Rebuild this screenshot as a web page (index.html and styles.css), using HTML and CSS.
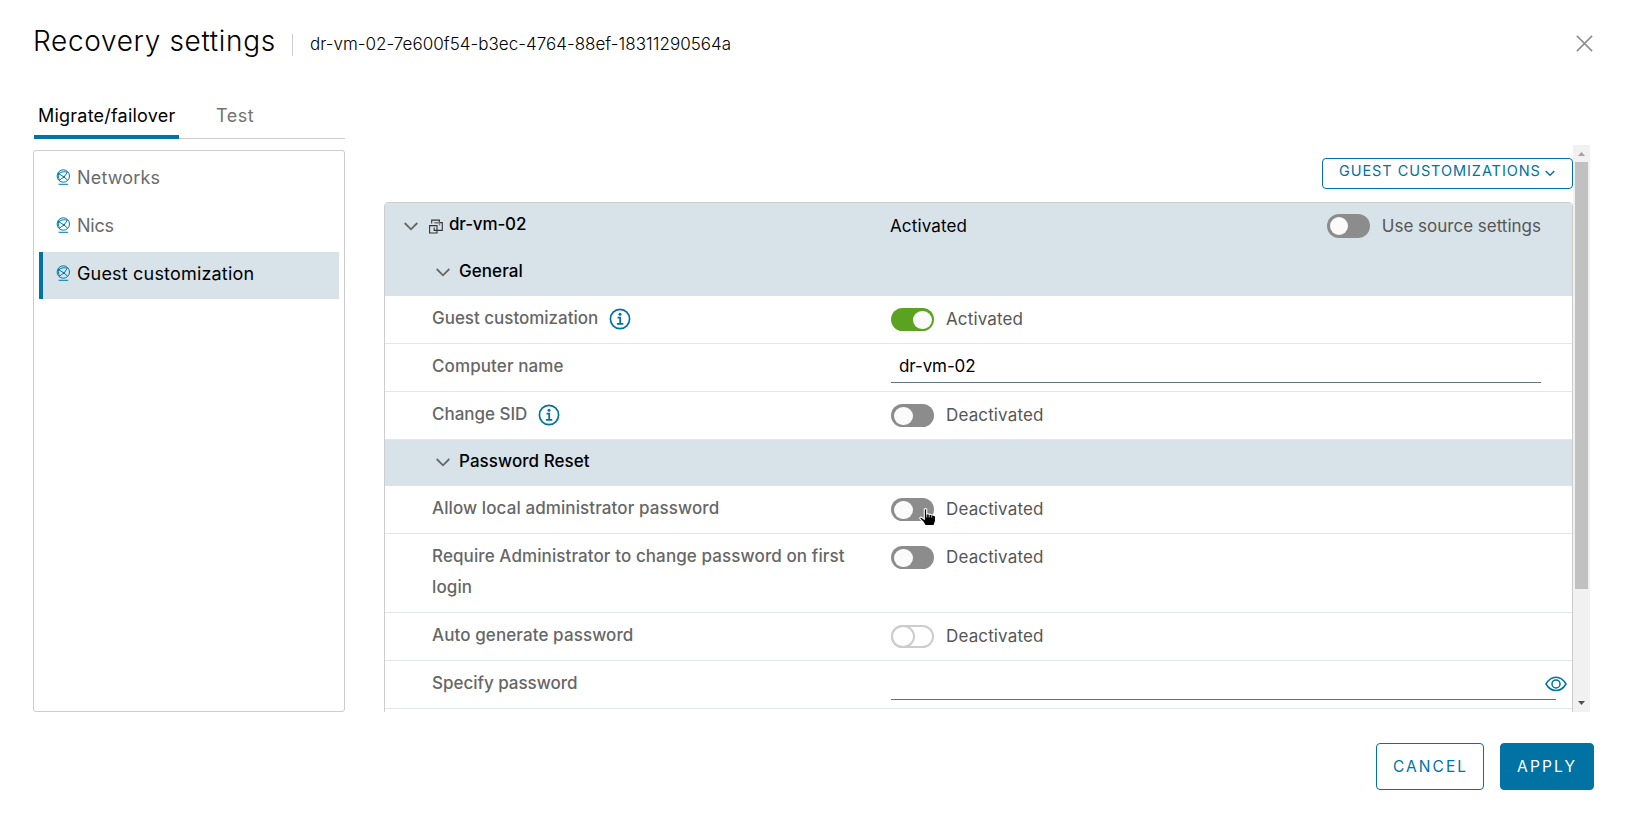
FILE: index.html
```
<!DOCTYPE html>
<html lang="en">
<head>
<meta charset="utf-8">
<title>Recovery settings</title>
<link rel="stylesheet" href="styles.css">
</head>
<body>
<svg class="defs" width="0" height="0" aria-hidden="true">
  <symbol id="globe" viewBox="0 0 15 17">
    <g fill="none" stroke="#0079ad" stroke-width="1">
      <circle cx="7.3" cy="7" r="6.2"/>
      <path d="M2.600 4.600 L8 8 L11.400 3.200 M2.600 4.600 C5.500 2.600 8.500 2.300 11.400 3.200 M2.600 4.600 C2.400 7 2.600 9 3.400 11.400 M3.400 11.400 C5 9.800 6.500 8.800 8 8 M8 8 L11.600 11.200"/>
      <path d="M2.600 15.300 H12.200"/>
    </g>
    <circle cx="8" cy="8" r="1.100" fill="#0079ad"/>
    <circle cx="2.800" cy="4.600" r=".9" fill="#0079ad"/>
  </symbol>
  <symbol id="chevron" viewBox="0 0 14 9">
    <path d="M.7 1 L7 7.3 L13.3 1" fill="none" stroke="#666" stroke-width="1.8"/>
  </symbol>
  <symbol id="info" viewBox="0 0 22 22">
    <circle cx="11" cy="11" r="9.6" fill="none" stroke="#0072a3" stroke-width="1.7"/>
    <circle cx="11" cy="6.2" r="1.5" fill="#0072a3"/>
    <path d="M8.5 9.6 H11.2 V15.8 M7.9 15.9 H14.3" fill="none" stroke="#0072a3" stroke-width="1.8"/>
  </symbol>
</svg>

<div class="dialog">
  <header class="header">
    <h1 class="title">Recovery settings</h1>
    <span class="divider"></span>
    <span class="subtitle">dr-vm-02-7e600f54-b3ec-4764-88ef-18311290564a</span>
    <svg class="close" width="17" height="17" viewBox="0 0 17 17"><path d="M.9 .9 L16.1 16.1 M16.1 .9 L.9 16.1" fill="none" stroke="#8c8c8c" stroke-width="1.5"/></svg>
  </header>

  <main class="body">
    <aside class="side">
      <nav class="tabs">
        <span class="tab tab-active">Migrate/failover</span>
        <span class="tab tab-test">Test</span>
      </nav>
      <div class="panel">
        <div class="nav-item"><svg class="globe" width="15" height="17"><use href="#globe"/></svg>Networks</div>
        <div class="nav-item"><svg class="globe" width="15" height="17"><use href="#globe"/></svg><span class="tight">Nics</span></div>
        <div class="nav-item nav-selected"><svg class="globe" width="15" height="17"><use href="#globe"/></svg>Guest customization</div>
      </div>
    </aside>

    <section class="content">
      <div class="scroll">
        <div class="menu-btn">GUEST CUSTOMIZATIONS<svg width="10" height="7" viewBox="0 0 10 7"><path d="M.7 1 L5 5.3 L9.3 1" fill="none" stroke="#0072a3" stroke-width="1.4"/></svg></div>

        <div class="card">
          <div class="row head vm">
            <div class="label">
              <svg class="chev" width="14" height="9"><use href="#chevron"/></svg>
              <svg class="vm-icon" width="14" height="15" viewBox="0 0 14 15"><g fill="none" stroke="#333" stroke-width="1.1"><path d="M.6 6.6 H8 V14 H.6 Z"/><path d="M2.7 4.5 V1.1 H10.4 V3.2"/><path d="M6 3.6 H13.3 V11.4 H5.2 V8.5" /><path d="M5.2 3.6 H10.6 V6.5" stroke="#777"/></g></svg>
              <span class="vm-name">dr-vm-02</span>
            </div>
            <div class="value strong">Activated</div>
            <div class="source"><span class="toggle"></span><span class="state">Use source settings</span></div>
          </div>
          <div class="row head sub"><svg class="chev" width="14" height="9"><use href="#chevron"/></svg><span>General</span></div>

          <div class="row">
            <div class="label label-tight">Guest customization<svg class="info" width="22" height="22"><use href="#info"/></svg></div>
            <div class="value"><span class="toggle on"></span><span class="state">Activated</span></div>
          </div>
          <div class="row">
            <div class="label">Computer name</div>
            <div class="field">dr-vm-02</div>
          </div>
          <div class="row">
            <div class="label label-tight">Change SID<svg class="info" width="22" height="22"><use href="#info"/></svg></div>
            <div class="value"><span class="toggle"></span><span class="state">Deactivated</span></div>
          </div>

          <div class="row head sub"><svg class="chev" width="14" height="9"><use href="#chevron"/></svg><span>Password Reset</span></div>

          <div class="row">
            <div class="label">Allow local administrator password</div>
            <div class="value"><span class="toggle"><svg class="pointer" width="20" height="22" viewBox="0 0 20 22"><path d="M6.3 2.2 Q7.5 1 8.7 2.2 V7 Q10 6.300 11.2 7.400 Q12.600 6.800 13.700 8 Q15.300 7.600 17.500 9.200 V14 L16 18.500 H7.200 L5.200 15 L1.800 11.600 Q1.600 9.900 3.600 10.200 L6.300 12.200 Z" fill="#000" stroke="#fff" stroke-width="1.1"/><path d="M11.200 8 V10.500 M13.700 8.500 V10.500 M8.700 7 V10.500" stroke="#fff" stroke-width=".7"/></svg></span><span class="state">Deactivated</span></div>
          </div>
          <div class="row row-tall">
            <div class="label">Require Administrator to change password on first login</div>
            <div class="value"><span class="toggle"></span><span class="state">Deactivated</span></div>
          </div>
          <div class="row">
            <div class="label">Auto generate password</div>
            <div class="value"><span class="toggle disabled"></span><span class="state">Deactivated</span></div>
          </div>
          <div class="row">
            <div class="label label-tight">Specify password</div>
            <div class="field field-wide"><svg class="eye" width="22" height="16" viewBox="0 0 22 16"><g fill="none" stroke="#0072a3" stroke-width="1.5"><path d="M1 8 C3.600 3.600 7 1.200 11 1.200 S18.400 3.600 21 8 C18.400 12.400 15 14.500 11 14.500 S3.600 12.400 1 8 Z"/><circle cx="11" cy="7.900" r="4"/></g></svg></div>
          </div>
          <div class="row"></div>
        </div>
      </div>
      <div class="scrollbar">
        <span class="arrow arrow-up"></span>
        <span class="thumb"></span>
        <span class="arrow arrow-down"></span>
      </div>
    </section>
  </main>

  <footer class="footer">
    <button class="btn btn-outline" type="button">CANCEL</button>
    <button class="btn btn-primary" type="button">APPLY</button>
  </footer>
</div>
</body>
</html>
```

FILE: styles.css
```
*, *::before { box-sizing: border-box; }

body {
  margin: 0;
  background: #fff;
  color: #000;
  font-family: Inter, "Open Sans", sans-serif;
  overflow: hidden;
}

.defs { display: block; }
svg { flex: none; }

.dialog {
  width: 1625px;
  height: 817px;
  display: flex;
  flex-direction: column;
}

/* Header */
.header {
  height: 100px;
  padding: 20px 32px 0 33px;
  display: flex;
  align-items: flex-start;
}
.title {
  margin: 0;
  padding-top: 1px;
  font-size: 28px;
  font-weight: 300;
  line-height: 40px;
  letter-spacing: 0.66px;
  width: 259px;
  white-space: nowrap;
}
.divider { width: 1px; height: 22px; margin-top: 14px; background: #ccc; }
.subtitle {
  margin-left: 17px;
  padding-top: 9px;
  font-size: 17px;
  font-weight: 300;
  line-height: 30px;
  letter-spacing: 0.03px;
}
.close { margin: 15px 0 0 auto; }

/* Body */
.body {
  height: 612px;
  padding-left: 33px;
  display: flex;
}
.side { width: 312px; display: flex; flex-direction: column; }
.tabs {
  height: 39px;
  margin-left: 1px;
  display: flex;
  box-shadow: inset 0 -1px 0 #ccc;
  font-size: 18px;
  line-height: 32px;
  letter-spacing: 0.22px;
}
.tab { height: 39px; color: #737373; }
.tab-active {
  width: 145px;
  padding-left: 4px;
  color: #000;
  border-bottom: 4px solid #0072a3;
}
.tab-test { margin-left: 37px; letter-spacing: 0.5px; }

.panel {
  margin-top: 11px;
  height: 562px;
  border: 1px solid #ccc;
  border-radius: 3px;
  padding: 4px 5px 0;
}
.nav-item {
  height: 48px;
  padding: 0 0 3px 16px;
  border-left: 4px solid transparent;
  display: flex;
  align-items: center;
  color: #6a6a6a;
  font-size: 18px;
  letter-spacing: 0.18px;
}
.nav-item .globe { margin: 0 6px 0 -3px; }
.tight { letter-spacing: -0.2px; }
.nav-selected {
  height: 47px;
  margin-top: 1px;
  padding-bottom: 4px;
  background: #d8e3e9;
  border-left-color: #0072a3;
  color: #000;
}

/* Scrolling content */
.content {
  margin: 45px 0 0 39px;
  width: 1206px;
  height: 567px;
  display: flex;
}
.scroll {
  width: 1189px;
  height: 567px;
  overflow: hidden;
  display: flex;
  flex-direction: column;
}
.menu-btn {
  align-self: flex-end;
  flex: none;
  width: 251px;
  height: 31px;
  margin: 13px 0 13px;
  padding-left: 16px;
  border: 1px solid #0072a3;
  border-radius: 4px;
  display: flex;
  gap: 4px;
  color: #0072a3;
  font-size: 14.5px;
  line-height: 24px;
  letter-spacing: 0.93px;
  white-space: nowrap;
}
.menu-btn svg { margin-top: 11px; }

.card {
  flex: none;
  border: 1px solid #ccc;
  border-radius: 4px 4px 0 0;
  overflow: hidden;
}
.row {
  height: 48px;
  padding-left: 47px;
  border-bottom: 1px solid #e3e6e8;
  display: flex;
  align-items: flex-start;
  font-size: 17px;
  line-height: 31px;
  letter-spacing: 0.14px;
}
.row-tall { height: 79px; }
.head { background: #d8e3e9; border-bottom: 0; height: 46px; }
.label {
  width: 459px;
  padding: 7px 20px 0 0;
  display: flex;
  align-items: flex-start;
  color: #666;
  font-weight: 460;
  letter-spacing: 0.1px;
}
.label-tight { letter-spacing: -0.02px; }
.info { margin: 5px 0 0 10.5px; }

.vm { height: 47px; padding-left: 19px; }
.vm .label { width: 486px; color: #000; padding-top: 6px; }
.vm .chev { margin-top: 13px; }
.vm-icon { margin: 10px 6px 0 11px; }
.vm-name { letter-spacing: -0.15px; }
.source {
  margin-left: auto;
  padding: 6px 31px 0 0;
  display: flex;
  letter-spacing: 0;
}
.sub { padding: 6px 0 0 51px; font-weight: 480; letter-spacing: 0.06px; }
.sub .chev { margin: 12px 9px 0 0; }

.value { padding-top: 6px; display: flex; }
.strong { color: #000; padding-top: 8px; }
.state { color: #565656; margin-left: 12px; }
.value .state, .source .state { padding-top: 2px; line-height: 30px; }

.toggle {
  position: relative;
  width: 43px;
  height: 23px;
  margin-top: 6px;
  border-radius: 12px;
  background: #8c8c8c;
}
.toggle::before {
  content: "";
  position: absolute;
  left: 3px;
  top: 2.5px;
  width: 18.5px;
  height: 18.5px;
  border-radius: 50%;
  background: #fafafa;
}
.on { background: #5aa220; }
.on::before { left: 22px; }
.disabled { background: #fff; border: 2px solid #ccc; }
.disabled::before {
  left: -2px;
  top: -2px;
  width: 24px;
  height: 23px;
  background: #fff;
  border: 2px solid #ccc;
}
.source .toggle { height: 24px; margin-top: 5px; }
.pointer { position: absolute; left: 26.5px; top: 9px; }

.field {
  position: relative;
  width: 650px;
  height: 39px;
  padding: 7px 0 0 8px;
  border-bottom: 1px solid #5f7380;
  letter-spacing: -0.1px;
}
.field-wide { width: 665px; }
.eye { position: absolute; right: -11px; top: 15px; }

/* Scrollbar */
.scrollbar {
  width: 17px;
  height: 567px;
  background: #f1f1f1;
  display: flex;
  flex-direction: column;
  align-items: center;
}
.thumb { width: 13px; height: 427px; background: #c1c1c1; }
.arrow { width: 7px; height: 4px; }
.arrow-up { margin: 7px 0 6px; background: #a3a3a3; clip-path: polygon(50% 0, 100% 100%, 0 100%); }
.arrow-down { margin: auto 0 7px; background: #505050; clip-path: polygon(0 0, 100% 0, 50% 100%); }

/* Footer */
.footer {
  padding: 31px 31px 0 0;
  display: flex;
  justify-content: flex-end;
  gap: 16px;
}
.btn {
  height: 47px;
  padding: 0 0 0 16px;
  border: 1px solid #0072a3;
  border-radius: 4px;
  text-align: left;
  font: 400 15.5px/46px Inter, "Open Sans", sans-serif;
}
.btn-outline { width: 108px; background: #fff; color: #0072a3; letter-spacing: 2.05px; }
.btn-primary { width: 94px; background: #0072a3; color: #fff; letter-spacing: 2.2px; }
```
